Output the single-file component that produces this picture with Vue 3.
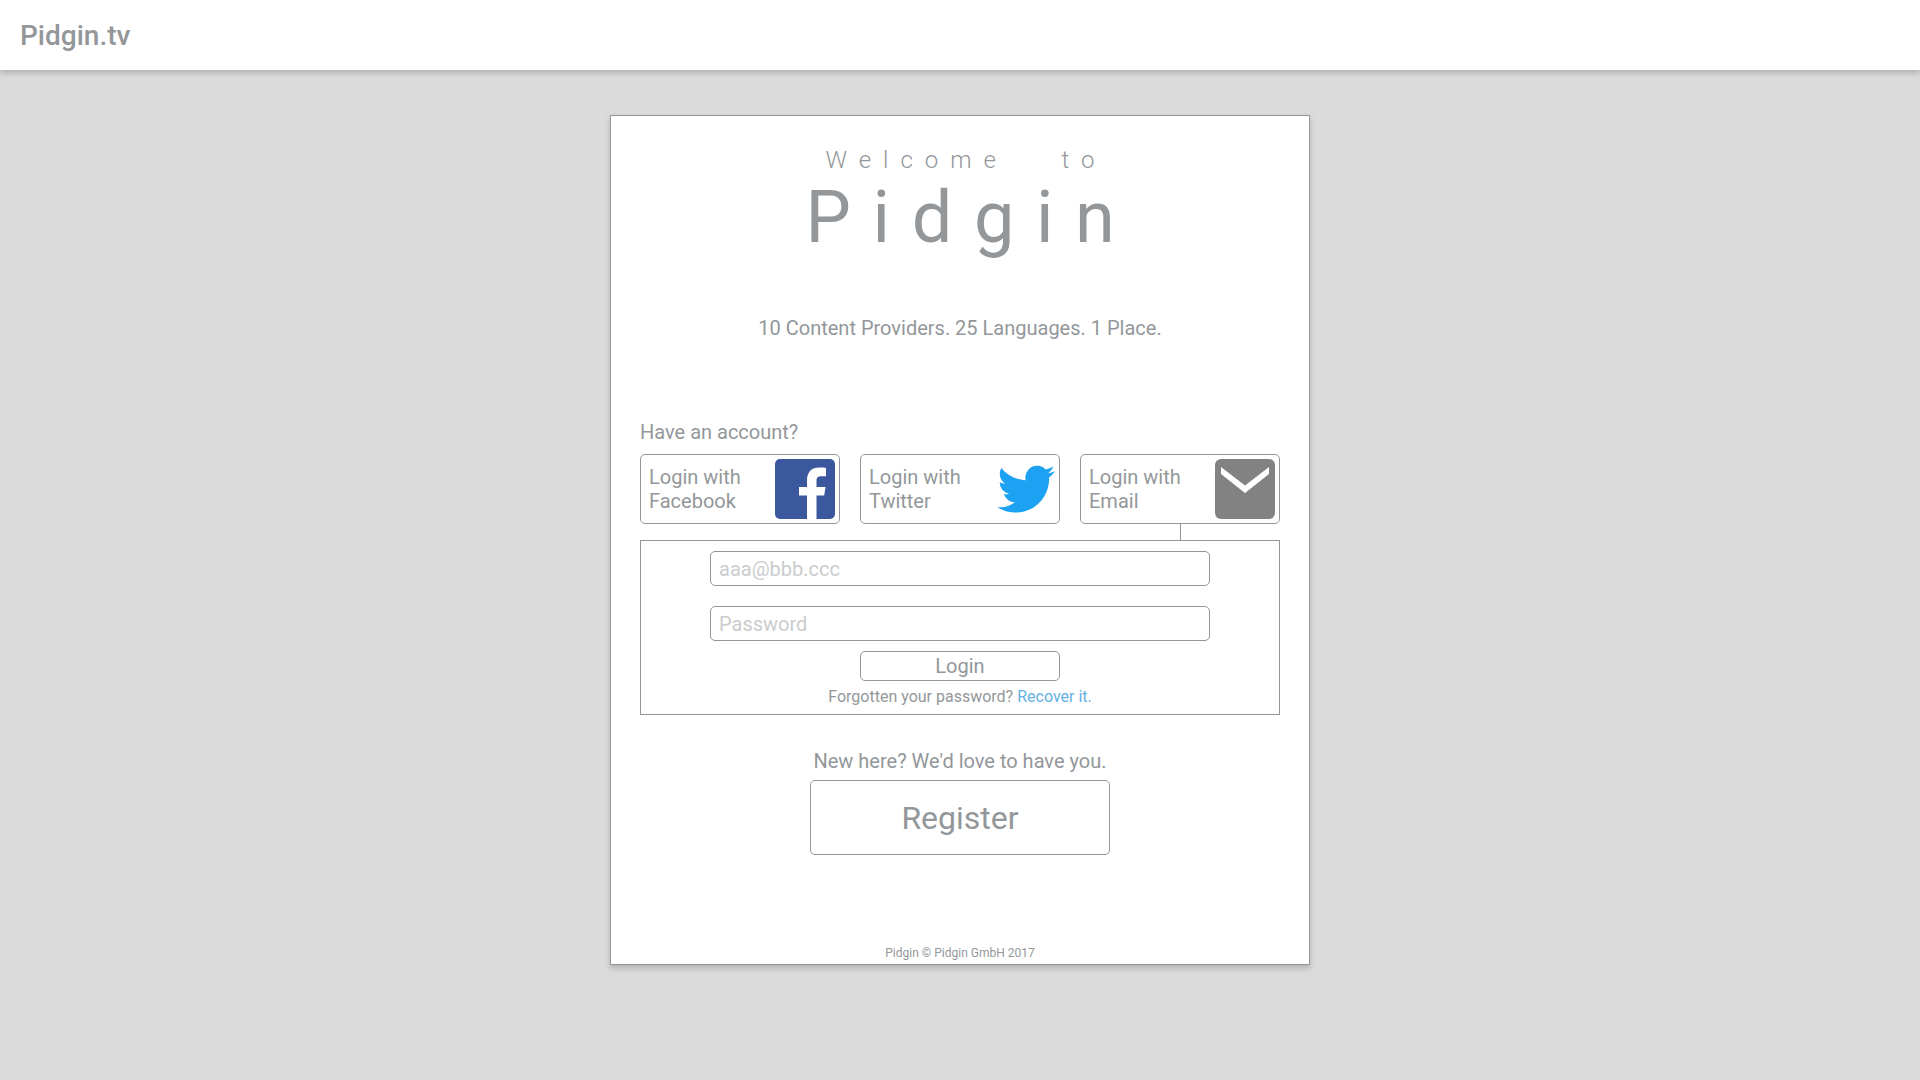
<script setup>
import { ref } from 'vue'

const email = ref('')
const password = ref('')
</script>

<template>
  <div class="page">
    <header class="topbar">
      <a class="brand" href="#">Pidgin.tv</a>
    </header>

    <main class="card">
      <h1 class="welcome">
        <span class="welcome-lead">Welcome &nbsp; to</span>
        <span class="welcome-name">Pidgin</span>
      </h1>
      <p class="tagline">10 Content Providers. 25 Languages. 1 Place.</p>

      <section class="account">
        <h2 class="prompt">Have an account?</h2>
        <div class="providers">
          <button class="outlined provider" type="button">
            <span>Login with<br />Facebook</span>
            <svg class="logo" viewBox="0 0 60 60" aria-hidden="true">
              <rect width="60" height="60" rx="5" fill="#3b579d" />
              <path
                d="M32 60V36.500h-8V28h8v-6.500C32 13 36.500 8.500 44.500 8.500c2.500 0 5 .2 6.500.400V17.200h-4.500c-4 0-5 1.600-5 4.800V28H50.500l-1.300 8.500H41.500V60z"
                fill="#fff"
              />
            </svg>
          </button>
          <button class="outlined provider" type="button">
            <span>Login with<br />Twitter</span>
            <svg class="logo" viewBox="0 0 60 60" aria-hidden="true">
              <path
                transform="translate(2.400 1.300) scale(2.400)"
                d="M23.953 4.570a10 10 0 01-2.825.775 4.958 4.958 0 002.163-2.723c-.951.555-2.005.959-3.127 1.184a4.920 4.920 0 00-8.384 4.482C7.690 8.095 4.067 6.130 1.640 3.162a4.822 4.822 0 00-.666 2.475c0 1.710.870 3.213 2.188 4.096a4.904 4.904 0 01-2.228-.616v.060a4.923 4.923 0 003.946 4.827 4.996 4.996 0 01-2.212.085 4.936 4.936 0 004.604 3.417 9.867 9.867 0 01-6.102 2.105c-.390 0-.779-.023-1.170-.067a13.995 13.995 0 007.557 2.209c9.053 0 13.998-7.496 13.998-13.985 0-.210 0-.420-.015-.630A9.935 9.935 0 0024 4.590z"
                fill="#1da1f2"
              />
            </svg>
          </button>
          <button class="outlined provider provider-active" type="button">
            <span>Login with<br />Email</span>
            <svg class="logo" viewBox="0 0 60 60" aria-hidden="true">
              <rect width="60" height="60" rx="6" fill="#828282" />
              <path d="M6 8L30 26.500L54 8V15L30 34L6 15z" fill="#fff" />
            </svg>
          </button>
        </div>

        <form class="login" @submit.prevent>
          <input
            v-model="email"
            class="outlined field"
            type="email"
            placeholder="aaa@bbb.ccc"
            aria-label="Email"
          />
          <input
            v-model="password"
            class="outlined field"
            type="password"
            placeholder="Password"
            aria-label="Password"
          />
          <button class="outlined submit" type="submit">Login</button>
          <p class="forgotten">
            Forgotten your password? <a class="recover" href="#">Recover it.</a>
          </p>
        </form>
      </section>

      <section class="signup">
        <p class="invite">New here? We'd love to have you.</p>
        <button class="outlined register" type="button">Register</button>
      </section>

      <footer class="legal">Pidgin © Pidgin GmbH 2017</footer>
    </main>
  </div>
</template>

<style>
body {
  margin: 0;
  background: #dbdbdb;
}
</style>

<style scoped>
.page,
.page * {
  box-sizing: border-box;
}

.page {
  color: #93979a;
  font-family: Roboto, "Liberation Sans", sans-serif;
  font-size: 20px;
  line-height: 24px;
}

h1,
h2,
p {
  margin: 0;
  font-size: inherit;
  font-weight: 400;
}

.topbar {
  display: flex;
  align-items: center;
  height: 70px;
  padding: 2px 20px 0;
  background: #fff;
  box-shadow: 0 3px 6px rgba(0, 0, 0, 0.2);
}

.brand {
  color: inherit;
  font-size: 28px;
  font-weight: 500;
  line-height: 32px;
  text-decoration: none;
}

.card {
  display: flex;
  flex-direction: column;
  max-width: 700px;
  margin: 45px auto;
  padding: 30px 29px 4px;
  background: #fff;
  border: 1px solid #93979a;
  box-shadow: 0 3px 6px rgba(0, 0, 0, 0.2);
}

.welcome {
  display: flex;
  flex-direction: column;
  align-items: center;
}

/* The left padding balances the space after the last letter */
.welcome-lead {
  padding-left: 12px;
  font-size: 24px;
  font-weight: 300;
  line-height: 28px;
  letter-spacing: 0.5em;
}

.welcome-name {
  padding-left: 22px;
  font-size: 72px;
  line-height: 88px;
  letter-spacing: 0.3em;
}

.tagline {
  margin-top: 54px;
  text-align: center;
}

.account {
  margin-top: 80px;
}

.outlined {
  background: #fff;
  border: 1px solid #93979a;
  border-radius: 5px;
  color: inherit;
  font: inherit;
}

.providers {
  display: flex;
  gap: 20px;
  margin-top: 10px;
}

.provider {
  position: relative;
  display: flex;
  flex: 1;
  align-items: center;
  justify-content: space-between;
  height: 70px;
  padding: 0 4px 0 8px;
  text-align: left;
}

/* Line that ties the chosen provider to its form */
.provider-active::after {
  content: "";
  position: absolute;
  top: 100%;
  left: 50%;
  height: 17px;
  border-left: 1px solid #93979a;
}

.logo {
  width: 60px;
  height: 60px;
}

.login {
  display: flex;
  flex-direction: column;
  align-items: center;
  margin-top: 16px;
  padding: 10px 20px 5px;
  border: 1px solid #93979a;
}

.field {
  width: 100%;
  max-width: 500px;
  height: 35px;
  padding: 0 8px;
}

.field + .field {
  margin-top: 20px;
}

.field::placeholder {
  color: #cacccd;
  opacity: 1;
}

.submit {
  width: 200px;
  height: 30px;
  margin-top: 10px;
  padding: 0;
}

.forgotten {
  margin-top: 4px;
  font-size: 16px;
}

.recover {
  color: #64b1e4;
  text-decoration: none;
}

.signup {
  display: flex;
  flex-direction: column;
  align-items: center;
  margin-top: 34px;
}

.register {
  width: 300px;
  height: 75px;
  margin-top: 7px;
  font-size: 32px;
}

.legal {
  margin-top: 91px;
  font-size: 12px;
  line-height: 14px;
  text-align: center;
}
</style>
